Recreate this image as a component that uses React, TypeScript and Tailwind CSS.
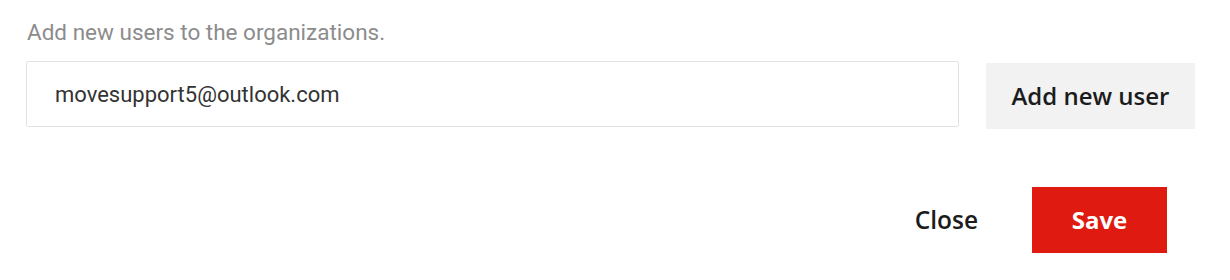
export default function App() {
  return (
    <div className="w-[1230px] h-[280px] bg-white pl-[26px] pt-[17px] font-['Roboto',sans-serif]">
      <p className="text-[22.5px] leading-[30px] text-[#8c8c8c] pl-[1px]">
        Add new users to the organizations.
      </p>

      <div className="flex items-start gap-[27px] mt-[14px]">
        <div className="w-[933px] h-[66px] border border-[#e3e3e3] rounded-[2px] flex items-center pl-[28px] text-[22px] text-[#333]">
          movesupport5@outlook.com
        </div>
        <button className="w-[209px] h-[66px] mt-[2px] bg-[#f2f2f2] text-[24px] font-semibold text-[#1c1c1c] font-['Open_Sans',sans-serif]">
          Add new user
        </button>
      </div>

      <div className="flex justify-end items-center w-[1141px] mt-[58px] gap-[54px]">
        <button className="text-[24.5px] font-semibold text-[#1c1c1c] font-['Open_Sans',sans-serif]">
          Close
        </button>
        <button className="w-[135px] h-[66px] bg-[#df1a10] text-white text-[24px] font-bold font-['Open_Sans',sans-serif]">
          Save
        </button>
      </div>
    </div>
  );
}
